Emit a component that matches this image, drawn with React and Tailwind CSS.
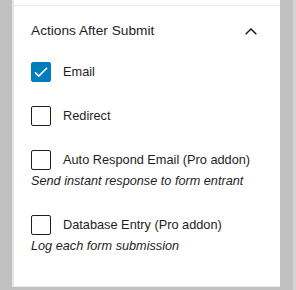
import { useState } from "react";

const actions = [
  { key: "email", label: "Email", checked: true },
  { key: "redirect", label: "Redirect", checked: false },
  {
    key: "autorespond",
    label: "Auto Respond Email (Pro addon)",
    help: "Send instant response to form entrant",
    checked: false,
  },
  {
    key: "database",
    label: "Database Entry (Pro addon)",
    help: "Log each form submission",
    checked: false,
  },
];

const Check = ({ checked, onClick }) => (
  <button
    type="button"
    onClick={onClick}
    className={
      checked
        ? "w-[20px] h-[20px] shrink-0 rounded-[2px] bg-[#007cba] border border-[#007cba] flex items-center justify-center"
        : "w-[20px] h-[20px] shrink-0 rounded-[2px] bg-white border border-[#1e1e1e]"
    }
  >
    {checked && (
      <svg width="18" height="18" viewBox="0 0 24 24" fill="none">
        <path d="M4 12.5l5 5L20 6.5" stroke="white" strokeWidth="2" />
      </svg>
    )}
  </button>
);

export default function App() {
  const [items, setItems] = useState(actions);

  const toggle = (key) =>
    setItems(items.map((i) => (i.key === key ? { ...i, checked: !i.checked } : i)));

  return (
    <div
      className="w-[296px] h-[290px] bg-[#c0c0c0] overflow-hidden flex"
      style={{ fontFamily: '"Liberation Sans", Arial, sans-serif' }}
    >
      <div className="ml-[12px] w-[268px] h-[287px] bg-white border-l-2 border-[#e6e6e6] pt-[5px] flex flex-col">
        <div className="border-t border-[#ececec] border-b flex-1 pl-[17px] pr-[23px]">
          <div className="h-[50px] flex items-center justify-between pt-[1px]">
            <span className="text-[13.7px] text-[#1e1e1e]">Actions After Submit</span>
            <svg width="12" height="7" viewBox="0 0 12 7" fill="none">
              <path d="M0.7 6.3L6 1l5.3 5.3" stroke="#1e1e1e" strokeWidth="1.5" />
            </svg>
          </div>
          <div className="flex flex-col gap-[24px] pt-[6px]">
            {items.map((item) => (
              <div key={item.key} className="flex flex-col">
                <div className="flex items-center gap-[12px]">
                  <Check checked={item.checked} onClick={() => toggle(item.key)} />
                  <span className="text-[12.75px] text-[#1e1e1e] leading-[20px]">{item.label}</span>
                </div>
                {item.help && (
                  <span className="text-[12.7px] italic text-[#1e1e1e] leading-[20px] mt-[1px]">
                    {item.help}
                  </span>
                )}
              </div>
            ))}
          </div>
        </div>
      </div>
      <div className="ml-auto w-[3px] h-full bg-[#d4d4d4]" />
    </div>
  );
}
